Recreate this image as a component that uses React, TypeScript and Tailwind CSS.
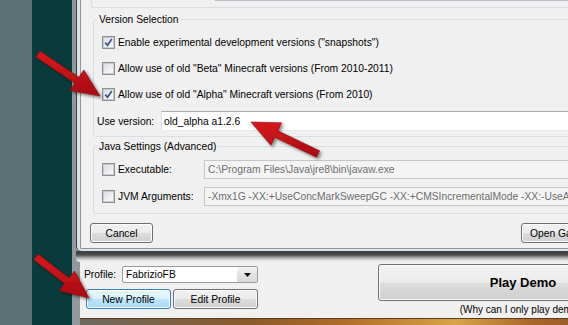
import React from "react";

// windows 7 style launcher + profile editor, with red callout arrows on top

const btn =
  "flex items-center justify-center rounded-[3px] border border-[#707070] bg-[linear-gradient(to_bottom,#f2f2f2_0%,#ebebeb_50%,#dddddd_51%,#cfcfcf_100%)] shadow-[inset_0_0_0_1px_#fbfbfb]";

const hotBtn =
  "flex items-center justify-center rounded-[3px] border border-[#3c7fb1] bg-[linear-gradient(to_bottom,#eaf6fd_0%,#d9f0fc_50%,#bee6fd_51%,#a7d9f5_100%)] shadow-[inset_0_0_0_1px_#f4fbff]";

function Check({ checked }: { checked?: boolean }) {
  return (
    <span className="flex h-[13px] w-[13px] shrink-0 items-center justify-center border border-[#8e8f8f] bg-white">
      <span className="flex h-[11px] w-[11px] items-center justify-center border border-[#c6cbd0] bg-[linear-gradient(135deg,#d9dde2,#fbfbfb)]">
        {checked && (
          <svg width="9" height="9" viewBox="0 0 9 9">
            <path d="M1.3 4.6 L3.5 7.3 L7.8 1" fill="none" stroke="#3f5390" strokeWidth="1.7" />
          </svg>
        )}
      </span>
    </span>
  );
}

function CheckRow({ label, checked, h }: { label: string; checked?: boolean; h: string }) {
  return (
    <div className={`flex items-center gap-[3px] pl-[8px] ${h}`}>
      <Check checked={checked} />
      <span>{label}</span>
    </div>
  );
}

function arrowPoints(tx: number, ty: number, hx: number, hy: number, shaft = 3.6, headLen = 28, headHalf = 12.5) {
  const dx = hx - tx;
  const dy = hy - ty;
  const l = Math.hypot(dx, dy);
  const ux = dx / l;
  const uy = dy / l;
  const px = -uy;
  const py = ux;
  const bx = hx - ux * headLen;
  const by = hy - uy * headLen;
  const pts = [
    [tx + px * shaft, ty + py * shaft],
    [bx + px * shaft, by + py * shaft],
    [bx + px * headHalf, by + py * headHalf],
    [hx, hy],
    [bx - px * headHalf, by - py * headHalf],
    [bx - px * shaft, by - py * shaft],
    [tx - px * shaft, ty - py * shaft],
  ];
  return pts.map((p) => p.map((n) => n.toFixed(1)).join(",")).join(" ");
}

const arrows = [
  { tx: 38, ty: 54, hx: 100, hy: 96 },
  { tx: 318, ty: 154, hx: 251, hy: 122 },
  { tx: 36, ty: 257, hx: 89, hy: 298 },
];

export default function App() {
  return (
    <div className="relative flex h-[325px] w-[568px] overflow-hidden bg-[#093b3c] font-['Liberation_Sans',Arial,sans-serif] text-[10.3px] leading-[13px] text-black">
      {/* desktop behind */}
      <div className="w-[32px] shrink-0 bg-[#5a7275]" />
      <div className="w-[40px] shrink-0 bg-[#093b3c]" />

      {/* launcher window */}
      <div className="flex w-[560px] shrink-0 flex-col bg-[linear-gradient(to_right,#8f989b,#b3babd_50%,#c9cdcf)]">
        {/* profile editor dialog */}
        <div className="ml-[4px] h-[251px] shrink-0 rounded-bl-[5px] border-l border-[#3a3d40] bg-[#dde2e6] pb-[2px] pl-[3px]">
          <div className="flex h-full flex-col rounded-bl-[2px] border-b border-l border-[#8d979d] bg-[#f0f0f0]">
            {/* end of upper group */}
            <div className="ml-[10px] h-[8px] shrink-0 rounded-bl-[3px] border-b border-l border-[#d5dfe5]">
              <div className="ml-[123px] h-px bg-[#b9bcc2]" />
            </div>

            {/* version selection */}
            <fieldset className="ml-[12px] mt-[5px] rounded-[3px] border border-[#d5dfe5] pb-[5px] pt-[3px]">
              <legend className="ml-[3px] px-[2px]">Version Selection</legend>
              <CheckRow h="h-[26px]" checked label={'Enable experimental development versions ("snapshots")'} />
              <CheckRow h="h-[26px]" label={'Allow use of old "Beta" Minecraft versions (From 2010-2011)'} />
              <CheckRow h="h-[27px]" checked label={'Allow use of old "Alpha" Minecraft versions (From 2010)'} />
              <div className="mt-[3px] flex h-[20px] items-center pl-[3px]">
                <span className="w-[64px]">Use version:</span>
                <div className="flex h-full flex-1 items-center border border-[#abadb3] border-b-[#e3e9ef] border-x-[#dbdfe6] bg-white pl-[2px]">
                  old_alpha a1.2.6
                </div>
              </div>
            </fieldset>

            {/* java settings */}
            <fieldset className="ml-[12px] mt-[3px] rounded-[3px] border border-[#d5dfe5] pb-[7px] pt-[7px]">
              <legend className="ml-[3px] px-[2px]">Java Settings (Advanced)</legend>
              <div className="flex h-[19px] items-center">
                <div className="flex w-[110px] items-center gap-[3px] pl-[8px]">
                  <Check />
                  <span>Executable:</span>
                </div>
                <div className="flex h-full flex-1 items-center border border-[#c2c5ca] bg-[#f4f4f4] pl-[3px] text-[#6d6d6d]">
                  C:\Program Files\Java\jre8\bin\javaw.exe
                </div>
              </div>
              <div className="mt-[8px] flex h-[19px] items-center">
                <div className="flex w-[110px] items-center gap-[3px] pl-[8px]">
                  <Check />
                  <span>JVM Arguments:</span>
                </div>
                <div className="flex h-full flex-1 items-center overflow-hidden whitespace-nowrap border border-[#c2c5ca] bg-[#f4f4f4] pl-[3px] text-[#6d6d6d]">
                  -Xmx1G -XX:+UseConcMarkSweepGC -XX:+CMSIncrementalMode -XX:-UseAdaptiveSizePolicy
                </div>
              </div>
            </fieldset>

            {/* dialog buttons */}
            <div className="mt-[9px] flex h-[20px] shrink-0">
              <div className={`${btn} ml-[9px] w-[63px]`}>Cancel</div>
              <div className={`${btn} ml-[368px] w-[90px]`}>Open Game Dir</div>
            </div>
          </div>
        </div>

        {/* shadow under the dialog */}
        <div className="ml-[4px] h-[11px] shrink-0 rounded-bl-[4px] bg-[linear-gradient(to_bottom,#3c3e40_0%,#4a4c4e_35%,#a3a5a7_60%,#dedfe0_85%,#eeeeee)]" />

        {/* launcher bottom bar */}
        <div className="ml-[8px] flex h-[56px] shrink-0 bg-[#f0f0f0]">
          <div className="flex w-[178px] shrink-0 flex-col pl-[4px] pt-[4px]">
            <div className="flex h-[17px] items-center">
              <span className="w-[38px]">Profile:</span>
              <div className="flex h-full w-[136px] items-center rounded-[2px] border border-[#9a9a9a] bg-white">
                <span className="flex-1 pl-[3px]">FabrizioFB</span>
                <div className="flex h-full w-[20px] items-center justify-center bg-[linear-gradient(to_bottom,#f4f4f4,#e3e3e3_50%,#d8d8d8)]">
                  <svg width="7" height="4" viewBox="0 0 7 4">
                    <path d="M0 0 H7 L3.5 4 Z" fill="#111" />
                  </svg>
                </div>
              </div>
            </div>
            <div className="ml-[2px] mt-[6px] flex h-[20px] gap-[2px]">
              <div className={`${hotBtn} w-[85px]`}>New Profile</div>
              <div className={`${btn} w-[85px]`}>Edit Profile</div>
            </div>
          </div>
          <div className="ml-[120px] flex w-[290px] shrink-0 flex-col pt-[2px]">
            <div className={`${btn} h-[37px] text-[13px] font-bold`}>Play Demo</div>
            <div className="mt-[3px] text-center text-[10px] leading-[12px]">(Why can I only play demo?)</div>
          </div>
        </div>

        {/* warm glow along the bottom */}
        <div className="ml-[8px] flex-1 border-t border-[#5a3a18] bg-[linear-gradient(to_right,#6e6a60_0%,#8a5a2b_30%,#b06c28_48%,#d8a448_68%,#a8662a_82%,#8a4f22_100%)]" />
      </div>

      {/* callout arrows */}
      <svg className="pointer-events-none absolute inset-0" width="568" height="325" viewBox="0 0 568 325">
        <defs>
          <filter id="sh" x="-20%" y="-20%" width="140%" height="140%">
            <feDropShadow dx="2" dy="2" stdDeviation="1.5" floodColor="#000" floodOpacity="0.45" />
          </filter>
          <linearGradient id="rd" x1="0" y1="0" x2="0" y2="1">
            <stop offset="0" stopColor="#d8191f" />
            <stop offset="1" stopColor="#a60d12" />
          </linearGradient>
        </defs>
        {arrows.map((a, i) => (
          <polygon
            key={i}
            points={arrowPoints(a.tx, a.ty, a.hx, a.hy)}
            fill="url(#rd)"
            stroke="#8c0a0e"
            strokeWidth="0.6"
            strokeLinejoin="round"
            filter="url(#sh)"
          />
        ))}
      </svg>
    </div>
  );
}
